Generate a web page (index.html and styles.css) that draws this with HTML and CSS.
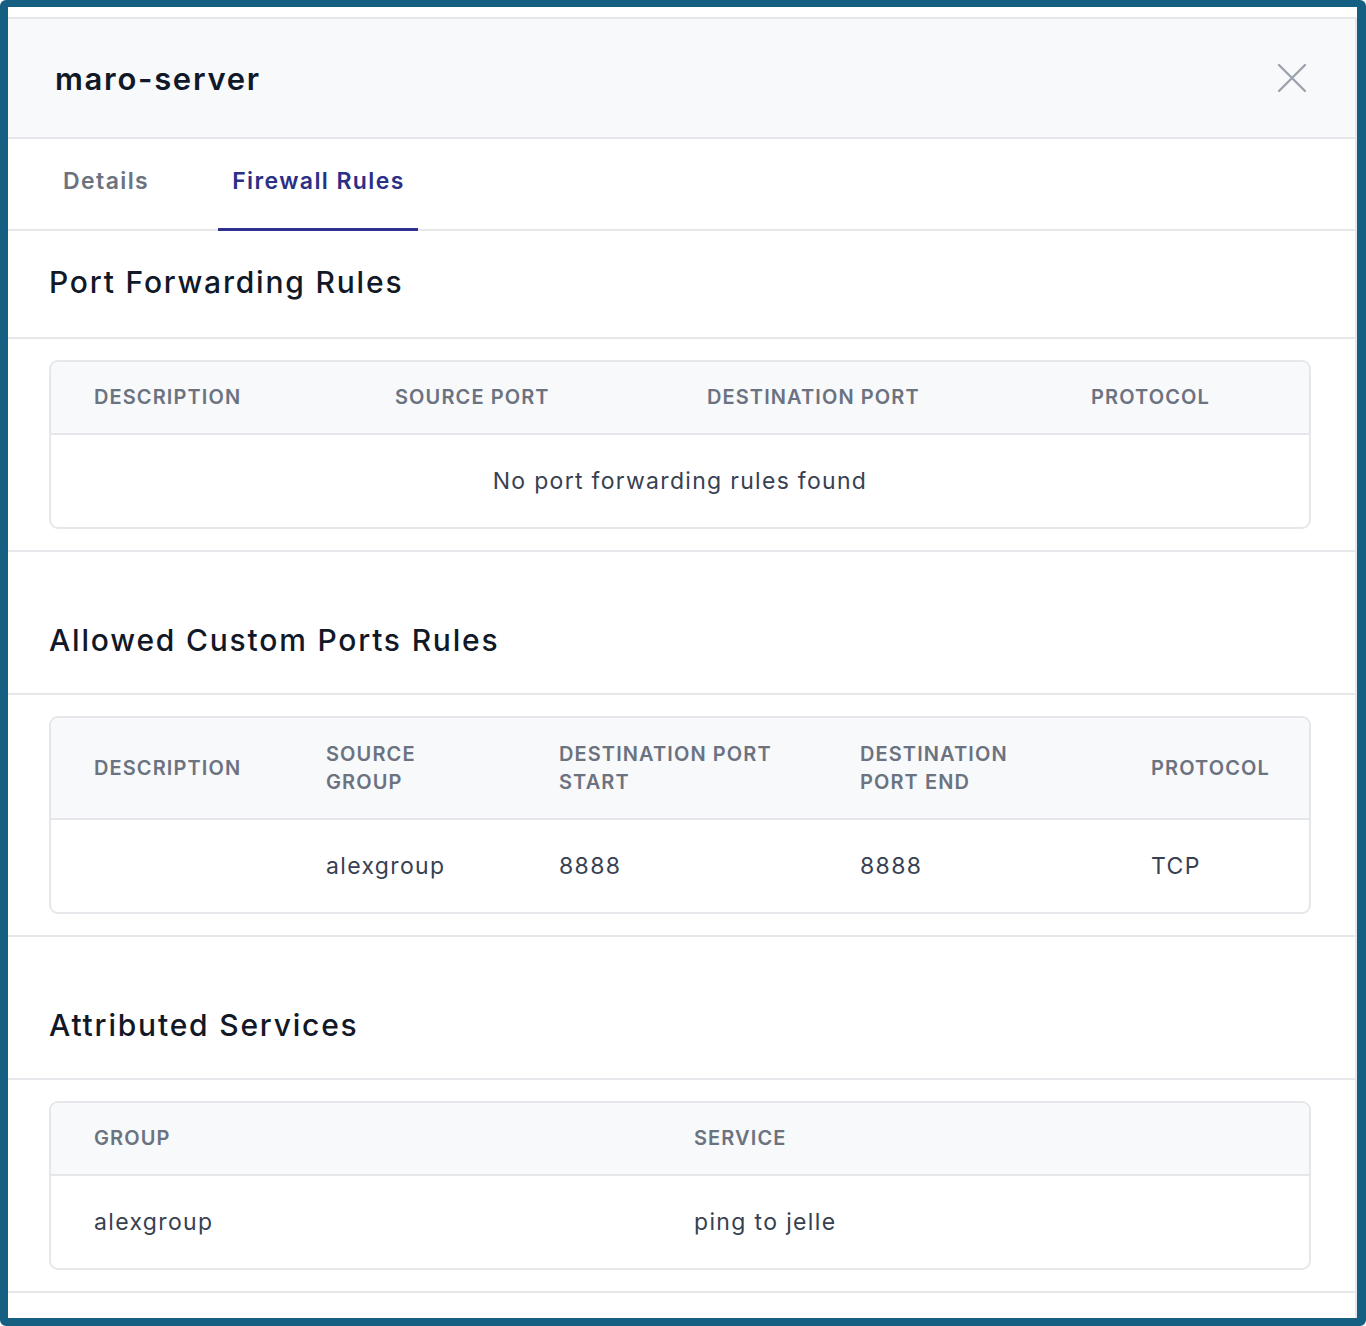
FILE: index.html
```html
<!DOCTYPE html>
<html lang="en">
<head>
<meta charset="utf-8">
<title>maro-server</title>
<link rel="stylesheet" href="styles.css">
</head>
<body>
<div class="frame">
  <div class="modal">
    <header class="modal-header">
      <h1 class="modal-title">maro-server</h1>
      <button class="close-btn" aria-label="Close">
        <svg width="32" height="32" viewBox="0 0 32 32"><path d="M3 3 L29 29 M29 3 L3 29" stroke="#9ca3af" stroke-width="2.4" stroke-linecap="round" fill="none"/></svg>
      </button>
    </header>
    <nav class="tabs">
      <a class="tab">Details</a>
      <a class="tab active">Firewall Rules</a>
    </nav>

    <section class="section">
      <h2 class="section-title">Port Forwarding Rules</h2>
      <div class="section-body">
        <div class="table t1">
          <div class="thead">
            <div class="th">Description</div>
            <div class="th">Source Port</div>
            <div class="th">Destination Port</div>
            <div class="th">Protocol</div>
          </div>
          <div class="empty">No port forwarding rules found</div>
        </div>
      </div>
    </section>

    <section class="section spaced">
      <h2 class="section-title">Allowed Custom Ports Rules</h2>
      <div class="section-body">
        <div class="table t2">
          <div class="thead">
            <div class="th">Description</div>
            <div class="th">Source<br>Group</div>
            <div class="th">Destination Port<br>Start</div>
            <div class="th">Destination<br>Port End</div>
            <div class="th">Protocol</div>
          </div>
          <div class="trow">
            <div class="td"></div>
            <div class="td">alexgroup</div>
            <div class="td">8888</div>
            <div class="td">8888</div>
            <div class="td">TCP</div>
          </div>
        </div>
      </div>
    </section>

    <section class="section spaced">
      <h2 class="section-title">Attributed Services</h2>
      <div class="section-body">
        <div class="table t3">
          <div class="thead">
            <div class="th">Group</div>
            <div class="th">Service</div>
          </div>
          <div class="trow">
            <div class="td">alexgroup</div>
            <div class="td">ping to jelle</div>
          </div>
        </div>
      </div>
    </section>
  </div>
</div>
</body>
</html>
```
FILE: styles.css
```css
* { box-sizing: border-box; }
html, body { margin: 0; padding: 0; background: #ffffff; }
body { font-family: "Inter", "Noto Sans", "DejaVu Sans", sans-serif; color: #111827; }

.frame {
  width: 1366px;
  height: 1326px;
  border-style: solid;
  border-color: #155f83;
  border-width: 7px 9px 8px 8px;
  border-radius: 6px;
  background: #ffffff;
  padding-top: 10px;
  overflow: hidden;
}
.modal {
  border-right: 2px solid #e5e7eb;
  height: 100%;
}

.modal-header {
  height: 122px;
  background: #f8f9fb;
  border-top: 2px solid #e5e7eb;
  border-bottom: 2px solid #e5e7eb;
  display: flex;
  align-items: center;
  justify-content: space-between;
  padding: 0 47px 0 47px;
}
.modal-title {
  margin: 0;
  font-size: 31px;
  font-weight: 600;
  letter-spacing: 1.7px;
  color: #111827;
}
.close-btn {
  border: 0;
  background: transparent;
  padding: 0;
  width: 32px;
  height: 32px;
  display: flex;
}

.tabs {
  display: flex;
  gap: 56px;
  padding: 0 0 0 41px;
  height: 92px;
  border-bottom: 2px solid #e5e7eb;
}
.tab {
  display: flex;
  align-items: center;
  padding: 0 13px 5px 14px;
  font-size: 23px;
  font-weight: 600;
  letter-spacing: 1.4px;
  color: #6b7280;
  border-bottom: 3px solid transparent;
  margin-bottom: -2px;
}
.tab.active {
  color: #2b2f86;
  border-bottom-color: #2e3192;
}

.section.spaced { margin-top: 36px; }
.section-title {
  margin: 0;
  padding: 33px 41px 37px;
  line-height: 36px;
  font-size: 30px;
  font-weight: 500;
  letter-spacing: 1.8px;
  color: #111827;
  border-bottom: 2px solid #e5e7eb;
}
.section.spaced .section-title { padding-top: 34px; padding-bottom: 35px; }
.section-body {
  padding: 21px 44px 21px 41px;
  border-bottom: 2px solid #e5e7eb;
}

.table {
  border: 2px solid #e5e7eb;
  border-radius: 9px;
  overflow: hidden;
}
.thead, .trow { display: grid; }
.t1 .thead { grid-template-columns: 301px 312px 384px 1fr; }
.t2 .thead, .t2 .trow { grid-template-columns: 232px 233px 301px 291px 1fr; }
.t3 .thead, .t3 .trow { grid-template-columns: 600px 1fr; }

.thead {
  background: #f8f9fb;
  border-bottom: 2px solid #e5e7eb;
  align-items: center;
}
.th {
  padding: 21px 10px 22px 43px;
  font-size: 20px;
  line-height: 28px;
  font-weight: 600;
  letter-spacing: 1.1px;
  text-transform: uppercase;
  white-space: nowrap;
  color: #6b7280;
}
.t2 .th { padding-top: 22px; padding-bottom: 22px; }
.td {
  padding: 30px 10px 30px 43px;
  font-size: 23px;
  line-height: 32px;
  letter-spacing: 1.35px;
  color: #374151;
}
.empty {
  text-align: center;
  padding: 30px 0 30px;
  font-size: 23px;
  line-height: 32px;
  letter-spacing: 1.3px;
  color: #374151;
}
```
